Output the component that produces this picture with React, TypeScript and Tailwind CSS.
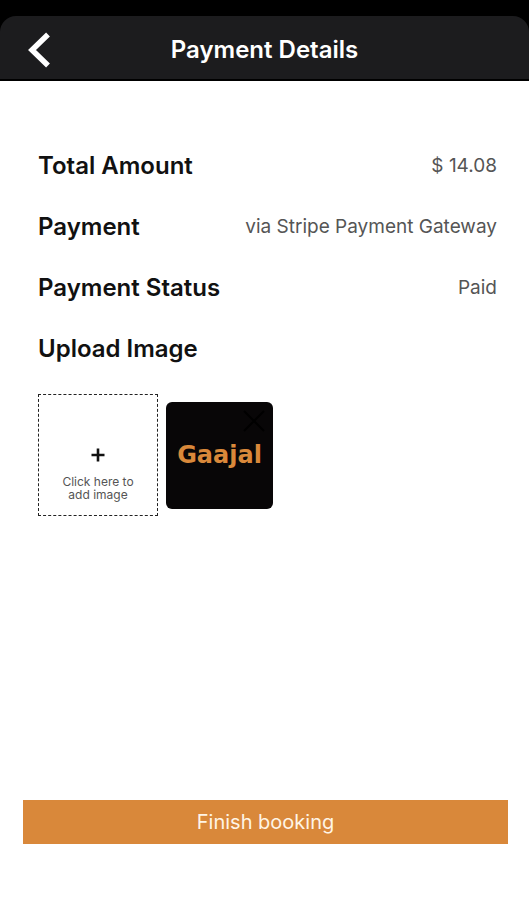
import { useState } from "react";

interface DetailRowProps {
  label: string;
  value: string;
}

const details: DetailRowProps[] = [
  { label: "Total Amount", value: "$ 14.08" },
  { label: "Payment", value: "via Stripe Payment Gateway" },
  { label: "Payment Status", value: "Paid" },
];

function DetailRow({ label, value }: DetailRowProps) {
  return (
    <div className="flex items-center justify-between gap-4">
      <dt className="text-[24px] leading-7 font-semibold text-[#111111]">{label}</dt>
      <dd className="text-[19px] leading-7 text-[#555555] text-right">{value}</dd>
    </div>
  );
}

export default function App() {
  const [hasImage, setHasImage] = useState(true);

  return (
    <div className="min-h-screen flex flex-col bg-white font-['Inter','Liberation_Sans',sans-serif]">
      <div className="bg-black pt-4">
        <header className="grid grid-cols-[1fr_auto_1fr] items-center h-[65px] pt-1 px-6 bg-[#1c1c1e] rounded-t-2xl border-b-2 border-black">
          <button type="button" aria-label="Back" className="w-8 h-10 flex items-center justify-center">
            <svg width="24" height="36" viewBox="0 0 24 36" fill="none" stroke="#ffffff" strokeWidth="5.5">
              <path d="M20 2.5 L4 18 L20 33.5" />
            </svg>
          </button>
          <h1 className="text-[24px] leading-7 font-semibold text-white">Payment Details</h1>
        </header>
      </div>

      <main className="flex-1 flex flex-col pt-[71px] pb-14">
        <div className="pl-[38px] pr-8">
          <dl className="flex flex-col gap-[33px]">
            {details.map((item) => (
              <DetailRow key={item.label} label={item.label} value={item.value} />
            ))}
          </dl>

          <h2 className="mt-[33px] text-[24px] leading-7 font-semibold text-[#111111]">Upload Image</h2>

          <div className="mt-[31px] flex items-center gap-2">
            <label className="w-[120px] h-[122px] pt-[50px] flex flex-col items-center border border-dashed border-[#222222] cursor-pointer">
              <svg width="14" height="20" viewBox="0 0 14 20" fill="none" stroke="#111111" strokeWidth="2.6">
                <path d="M0.5 10 H13.5 M7 3.5 V16.5" />
              </svg>
              <span className="mt-[10px] w-20 text-center text-[12px] leading-[13px] text-[#555555]">
                Click here to add image
              </span>
              <input type="file" accept="image/*" className="sr-only" onChange={() => setHasImage(true)} />
            </label>

            {hasImage && (
              <div className="relative w-[107px] h-[107px] flex items-center justify-center rounded-md bg-[#080607]">
                <span className="font-['DejaVu_Sans',sans-serif] text-[24px] leading-7 font-bold text-[#d9883a]">
                  Gaajal
                </span>
                <button
                  type="button"
                  aria-label="Remove image"
                  onClick={() => setHasImage(false)}
                  className="absolute top-2 right-2"
                >
                  <svg width="22" height="22" viewBox="0 0 22 22" fill="none" stroke="#000000" strokeWidth="2">
                    <path d="M1 1 L21 21 M21 1 L1 21" />
                  </svg>
                </button>
              </div>
            )}
          </div>
        </div>

        <div className="mt-auto pl-[23px] pr-[21px]">
          <button type="button" className="w-full h-11 bg-[#d9883a] text-[20px] leading-7 text-[#fff5e6]">
            Finish booking
          </button>
        </div>
      </main>
    </div>
  );
}
